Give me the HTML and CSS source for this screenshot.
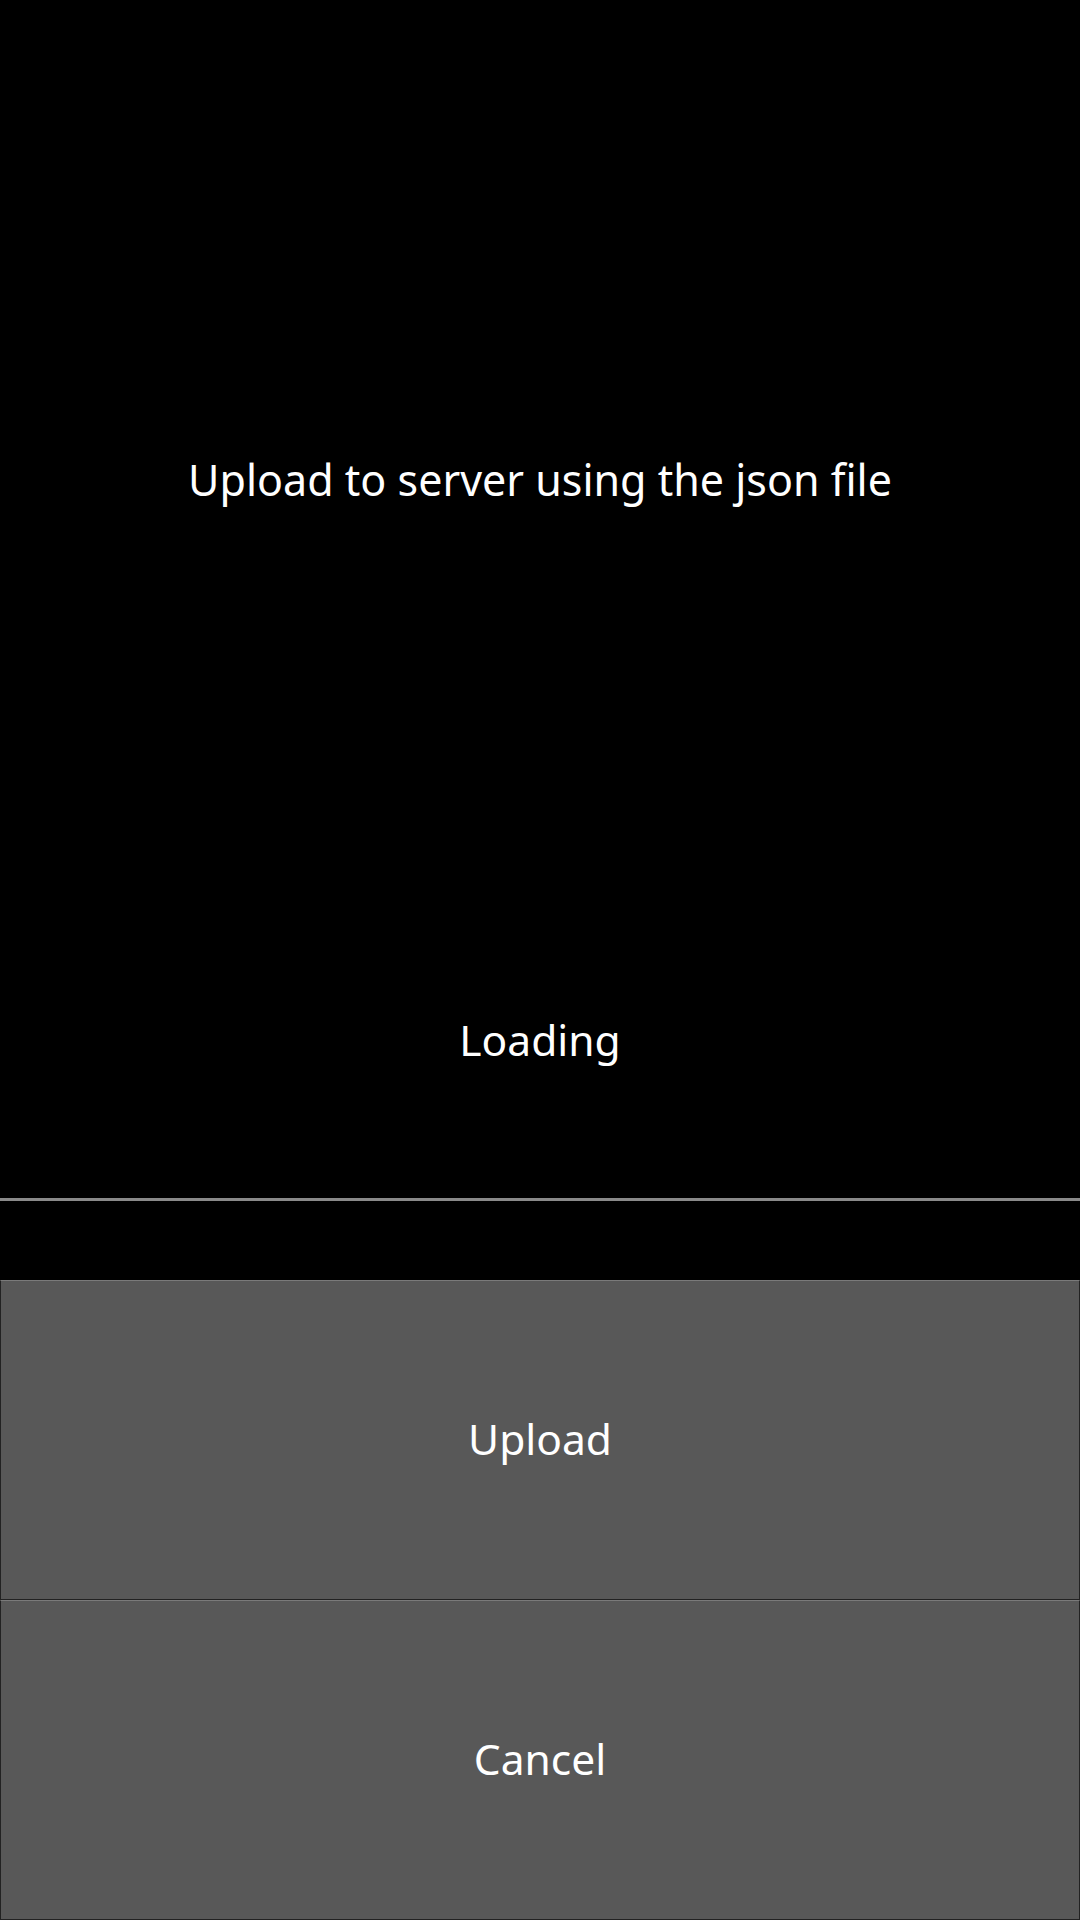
FILE: index.html
```html
<!DOCTYPE html>
<html>
<head>
<meta charset="utf-8">
<link rel="stylesheet" href="styles.css">
</head>
<body>
<div class="screen">
  <div class="content">
    <div class="title">Upload to server using the json file</div>
    <div class="status">Loading</div>
  </div>
  <div class="divider"></div>
  <div class="actions">
    <button class="btn">Upload</button>
    <button class="btn">Cancel</button>
  </div>
</div>
</body>
</html>
```
FILE: styles.css
```css
html, body {
  margin: 0;
  padding: 0;
  background: #000;
}
.screen {
  width: 1080px;
  height: 1920px;
  display: flex;
  flex-direction: column;
  font-family: "Noto Sans", "Open Sans", sans-serif;
  color: #fff;
}
.content {
  height: 1198px;
  display: flex;
  flex-direction: column;
  align-items: center;
  padding-top: 450px;
  box-sizing: border-box;
}
.title {
  font-size: 43px;
  line-height: 60px;
}
.status {
  margin-top: 500px;
  font-size: 42.5px;
  line-height: 60px;
}
.divider {
  height: 3px;
  background: #8a8a8a;
}
.actions {
  margin-top: 79px;
  display: flex;
  flex-direction: column;
  flex: 1;
}
.btn {
  flex: 1;
  margin: 0;
  background: #585858;
  border: 1px solid #222;
  border-top-color: #7a7a7a;
  color: #fff;
  font-family: "Noto Sans", "Open Sans", sans-serif;
  font-size: 42.5px;
  padding: 0 0 4px 0;
}
```
